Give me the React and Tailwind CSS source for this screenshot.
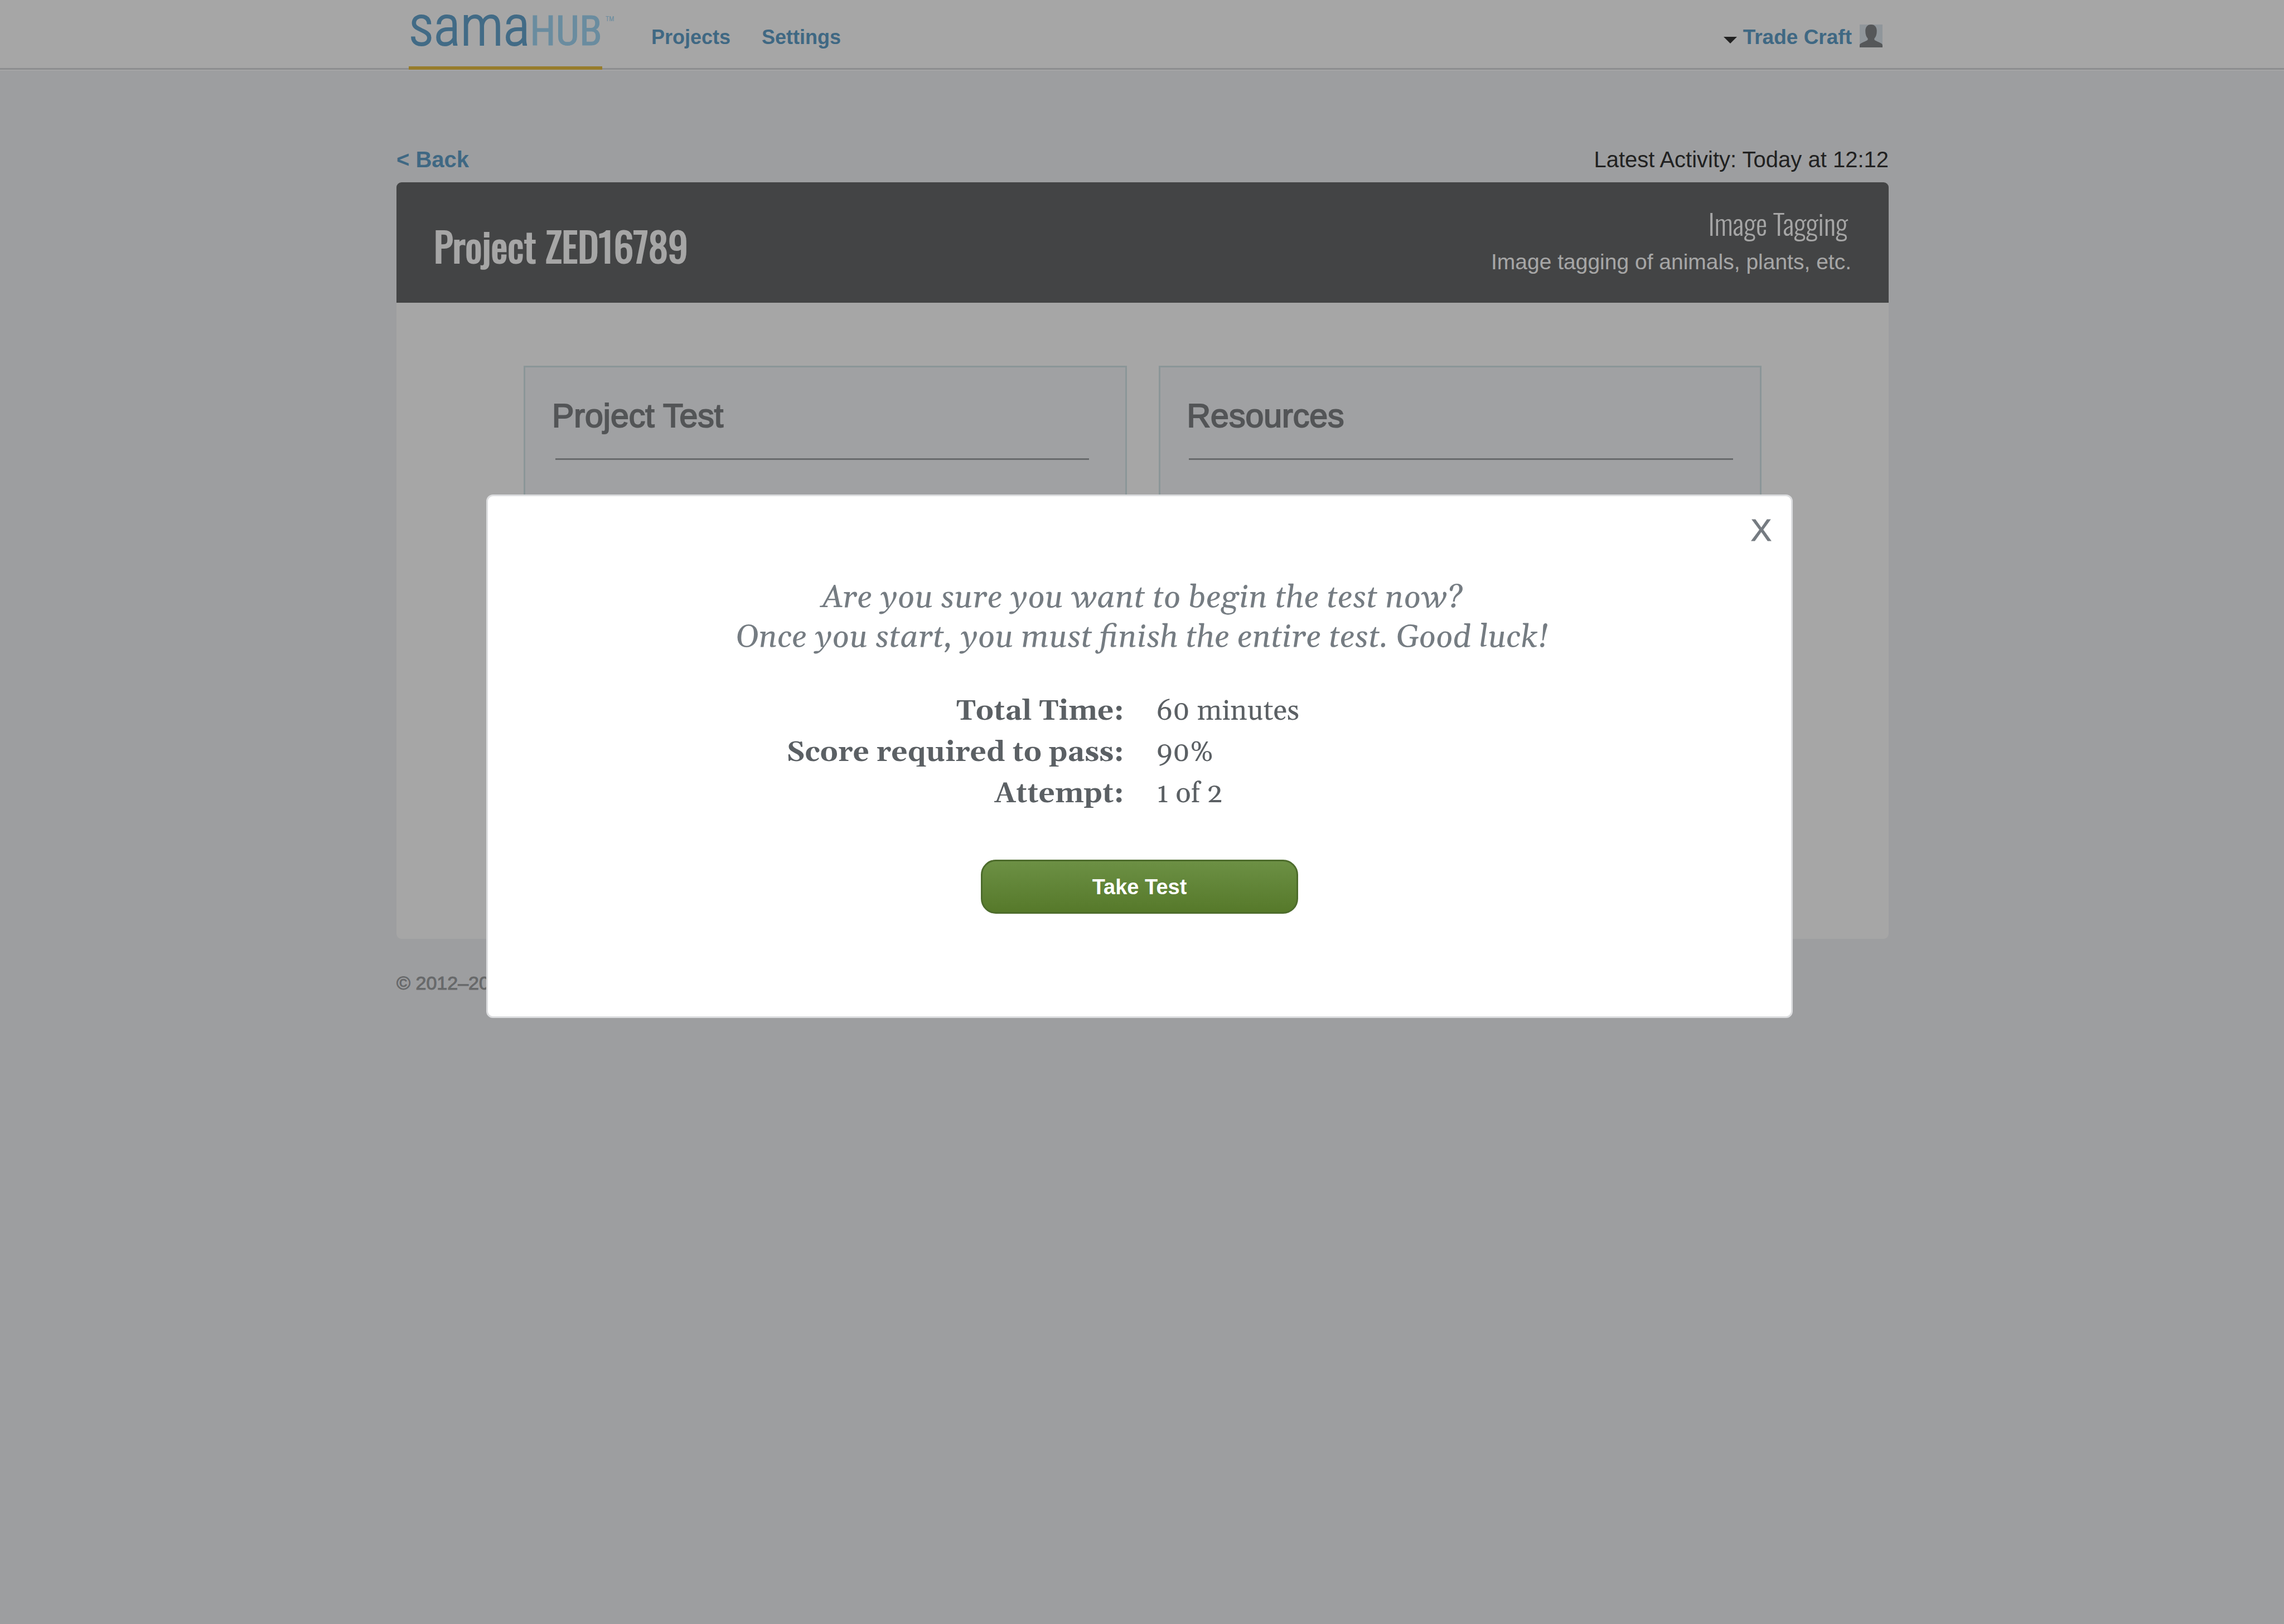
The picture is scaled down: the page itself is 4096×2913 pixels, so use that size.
import React from "react";

const navLinks = ["Projects", "Settings"];

const testFacts = [
  { label: "Total Time:", value: "60 minutes" },
  { label: "Score required to pass:", value: "90%" },
  { label: "Attempt:", value: "1 of 2" },
];

function Logo() {
  return (
    <a
      href="#home"
      className="relative ml-[22px] flex h-[125px] items-baseline border-b-6 border-[#e8bf42] font-['Roboto_Condensed',Roboto,sans-serif]"
    >
      <span className="text-[101px] leading-[94px] font-light text-[#66a5ce] [-webkit-text-stroke:2px_#66a5ce]">
        sama
      </span>
      <span className="text-[75px] leading-none text-[#a3d8f5] [-webkit-text-stroke:1px_#a3d8f5]">HUB</span>
      <span className="absolute top-[28px] left-full ml-[6px] text-[12px] leading-[12px] text-[#a3d8f5]">TM</span>
    </a>
  );
}

function Avatar() {
  return (
    <svg viewBox="0 0 42 42" className="h-[41px] w-[41px]" aria-hidden="true">
      <rect width="42" height="42" fill="#dde6ee" />
      <path
        d="M21 0C14 0 10.500 5 10.500 12c0 6 1.500 10.500 4.500 13.500v2.500C12 31.500 0 33.500 0 38v4h42v-4c0-4.500-12-6.500-15-10v-2.500c3-3 4.500-7.500 4.500-13.500C31.500 5 28 0 21 0z"
        fill="#838689"
      />
    </svg>
  );
}

function Header() {
  return (
    <header className="h-[122px] bg-white shadow-[0_3px_0_#d7d9dc,0_5px_0_#ffffff]">
      <div className="mx-auto flex w-full max-w-[2678px] items-start pl-[2px]">
        <Logo />
        <nav className="ml-[88px] flex gap-[56px] pt-[47px] text-[36px] leading-[40px] font-bold text-[#62a0ca]">
          {navLinks.map((name) => (
            <a key={name} href={"#" + name.toLowerCase()}>
              {name}
            </a>
          ))}
        </nav>
        <button
          type="button"
          className="mr-[11px] ml-auto flex items-center pt-[44px] text-[37px] leading-[46px] font-bold text-[#62a0ca]"
        >
          <svg viewBox="0 0 24 12" className="mt-[9px] h-[12px] w-[24px]" aria-hidden="true">
            <path d="M0 0h24L12 12z" fill="#333333" />
          </svg>
          <span className="ml-[11px]">Trade Craft</span>
          <span className="ml-[14px] self-start">
            <Avatar />
          </span>
        </button>
      </div>
    </header>
  );
}

function Card({ title, ruleClass }) {
  return (
    <section className="min-h-[900px] border-3 border-[#d6e6ea] bg-[#f6f8fa] px-[48px] pt-[51px]">
      <h2 className="text-[59px] leading-[72px] text-[#808386] [-webkit-text-stroke:2px_#808386]">{title}</h2>
      <hr className={"mt-[40px] border-t-3 border-[#a0a3a6] " + ruleClass} />
    </section>
  );
}

function ConfirmDialog() {
  return (
    <div className="absolute inset-0 flex items-start justify-center bg-black/35 pt-[887px] pr-[9px]">
      <div
        role="dialog"
        aria-modal="true"
        aria-label="Begin test"
        className="relative w-full max-w-[2343px] rounded-[12px] border-3 border-[#dcdddf] bg-white pt-[147px] pb-[184px]"
      >
        <button
          type="button"
          aria-label="Close"
          className="absolute top-[31px] right-[35px] text-[56px] leading-[60px] text-[#757b81] [-webkit-text-stroke:1px_#757b81]"
        >
          X
        </button>
        <p className="pl-2 text-center font-['Gelasio','Liberation_Serif',serif] text-[57px] leading-[71px] text-[#757c82] italic">
          Are you sure you want to begin the test now?
          <br />
          Once you start, you must finish the entire test. Good luck!
        </p>
        <dl className="mt-[60px] grid grid-cols-2 gap-x-[58px] pl-[3px] font-['Gelasio','Liberation_Serif',serif] text-[51px] leading-[74px] text-[#5b6064]">
          {testFacts.map((fact) => (
            <React.Fragment key={fact.label}>
              <dt className="text-right font-bold">{fact.label}</dt>
              <dd>{fact.value}</dd>
            </React.Fragment>
          ))}
        </dl>
        <button
          type="button"
          className="mx-auto mt-[81px] block h-[97px] w-[569px] rounded-[27px] border-3 border-[#4d6c2c] bg-linear-to-b from-[#6c9044] to-[#56792a] text-[38px] leading-[44px] font-bold text-white"
        >
          Take Test
        </button>
      </div>
    </div>
  );
}

export default function App() {
  return (
    <div className="relative min-h-screen bg-[#f1f3f6] font-['Liberation_Sans',Arial,sans-serif]">
      <Header />
      <main className="mx-auto w-full max-w-[2678px] pt-[140px] pl-[2px]">
        <div className="mb-[17px] flex items-baseline justify-between text-[40px] leading-[48px]">
          <a href="#back" className="font-bold text-[#62a0ca]">
            &lt; Back
          </a>
          <p className="text-[#333333]">Latest Activity: Today at 12:12</p>
        </div>
        <div className="overflow-hidden rounded-[9px] bg-white">
          <div className="flex items-end justify-between bg-[#67696a] px-[67px] py-[42px] text-white">
            <h1 className="font-['Oswald','Roboto_Condensed',sans-serif] text-[71px] leading-[122px] font-normal [-webkit-text-stroke:2px_#ffffff]">
              Project ZED16789
            </h1>
            <div className="text-right leading-[62px]">
              <p className="pr-[6px] font-['Oswald','Roboto_Condensed',sans-serif] text-[51px] font-light">
                Image Tagging
              </p>
              <p className="mt-[8px] text-[39px]">Image tagging of animals, plants, etc.</p>
            </div>
          </div>
          <div className="grid grid-cols-2 gap-[57px] px-[228px] pt-[113px] pb-[128px]">
            <Card title="Project Test" ruleClass="mr-[17px] ml-[6px]" />
            <Card title="Resources" ruleClass="ml-[3px]" />
          </div>
        </div>
        <footer className="mt-[59px] text-[34px] leading-[40px] text-[#9fa1a4] [-webkit-text-stroke:1px_#9fa1a4]">
          © 2012–2013
        </footer>
      </main>
      <ConfirmDialog />
    </div>
  );
}
